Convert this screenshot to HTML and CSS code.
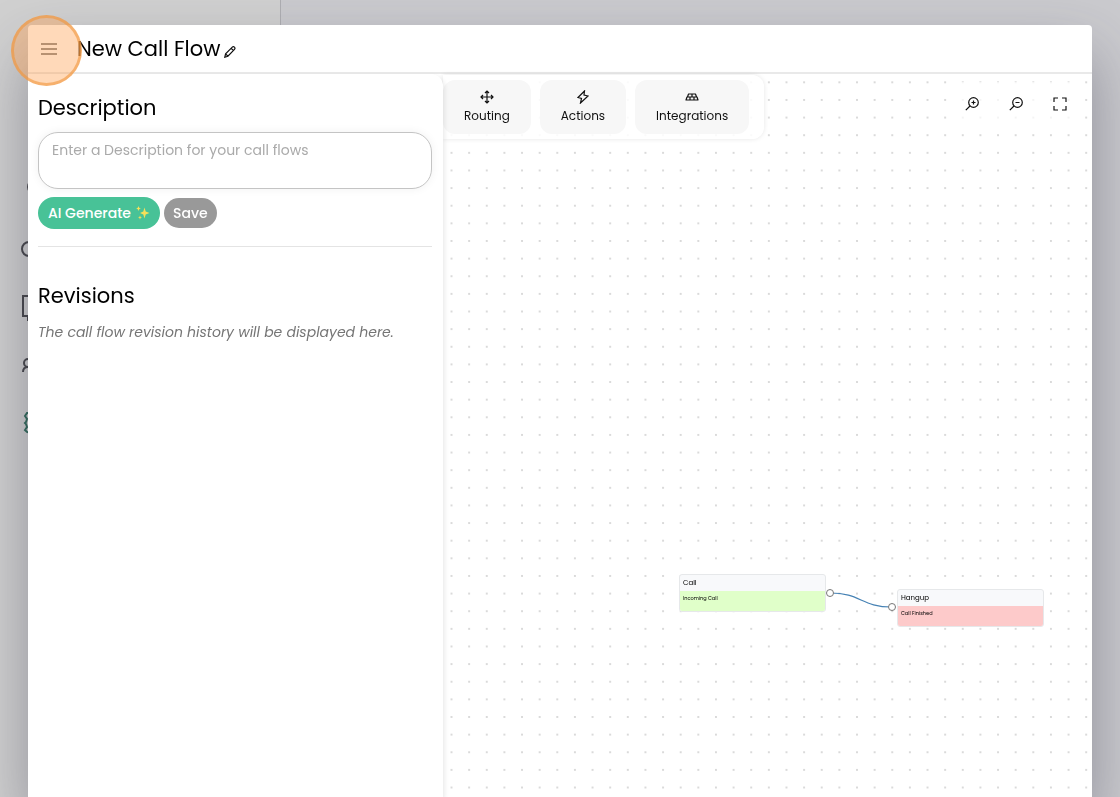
FILE: index.html
```html
<!DOCTYPE html>
<html lang="en">
  <head>
    <meta charset="UTF-8" />
    <meta name="viewport" content="width=device-width, initial-scale=1.0" />
    <title>New Call Flow</title>
    <link rel="stylesheet" href="styles.css">
  </head>
  <body>
    <nav class="sidebar">
      <svg class="side-icon" viewBox="0 0 30 30"><circle cx="15" cy="12" r="7" /></svg>
      <svg class="side-icon" viewBox="0 0 30 30"><circle cx="9" cy="16" r="7" /></svg>
      <svg class="side-icon" viewBox="0 0 30 30"><path d="M3 5h25v20H14l-6 4v-4H3z" /></svg>
      <svg class="side-icon" viewBox="0 0 30 30"><circle cx="8" cy="14" r="4" /><path d="M3 23c0-3 1-5 5-5s5 2 5 5" /></svg>
      <svg class="side-icon active" viewBox="0 0 30 30"><path d="M10 6L7 6 5 9l2 3-1 3-1 1 1 1 1 3-2 3 2 2 3 1 3-2 3 2 4-3v-5l2-2-2-3V8l-4-2-3 2z" /></svg>
    </nav>

    <div class="overlay">
      <main class="modal">
        <header class="modal-header">
          <button class="icon-button menu" aria-label="Menu">
            <svg viewBox="0 0 20 14"><path d="M2 2h16M2 7h16M2 12h16" /></svg>
          </button>
          <h1>New Call Flow</h1>
          <button class="icon-button edit" aria-label="Edit name">
            <svg viewBox="0 0 12 12"><path d="M.8 11.200l.8-3.400L8.300 1.100c.7-.7 1.500-.5 2.100.1s.8 1.400.1 2.100L3.900 10.200zM7.200 2.300l2.200 2.200M1.600 7.800l2.300 2.400" /></svg>
          </button>
        </header>

        <div class="modal-body">
          <section class="panel">
            <h2><label for="description">Description</label></h2>
            <textarea id="description" placeholder="Enter a Description for your call flows"></textarea>
            <div class="actions">
              <button class="pill generate">
                AI Generate
                <svg viewBox="0 0 14 14"><path d="M8.500 1.500l1.200 4 3.800 1.500-3.800 1.500-1.200 4-1.200-4L4 7l3.300-1.500zM2.500 0l.7 1.800 1.600.7-1.600.7-.7 1.800-.7-1.800L.2 2.500l1.600-.7zM4 9.500l.6 1.400 1.400.6-1.400.6L4 13.500l-.6-1.400-1.400-.6 1.400-.6z" /></svg>
              </button>
              <button class="pill save">Save</button>
            </div>
            <hr />
            <h2>Revisions</h2>
            <p class="empty">The call flow revision history will be displayed here.</p>
          </section>

          <section class="canvas">
            <svg class="grid">
              <defs>
                <pattern id="dots" width="20" height="20" patternUnits="userSpaceOnUse" patternTransform="translate(-0.300 -0.500) scale(0.8815)">
                  <circle cx="10" cy="10" r="1" />
                </pattern>
              </defs>
              <rect width="100%" height="100%" fill="url(#dots)" />
            </svg>

            <div class="toolbar">
              <button class="tool">
                <svg viewBox="0 0 14 14"><path d="M7 1v12M1 7h12M5 3l2-2 2 2M5 11l2 2 2-2M3 5L1 7l2 2M11 5l2 2-2 2" /></svg>
                Routing
              </button>
              <button class="tool">
                <svg viewBox="0 0 14 14"><path d="M8.500 1L2 7.500l3.500 1L4.500 13 12 6 8 5z" /></svg>
                Actions
              </button>
              <button class="tool">
                <svg viewBox="0 0 14 14"><path d="M3.500 4h7l1 3h-9zM2 7h10l1 3H1zM7 4v3M5 7v3M9 7v3" stroke-linejoin="round" /></svg>
                Integrations
              </button>
            </div>

            <div class="zoom">
              <button class="icon-button" aria-label="Zoom in">
                <svg viewBox="0 0 14 14"><circle cx="8.500" cy="5.500" r="4.800" /><path d="M5 9L.8 13.200M6.500 5.500h4M8.500 3.500v4" /></svg>
              </button>
              <button class="icon-button" aria-label="Zoom out">
                <svg viewBox="0 0 14 14"><circle cx="8.500" cy="5.500" r="4.800" /><path d="M5 9L.8 13.200M6.500 5.500h4" /></svg>
              </button>
              <button class="icon-button" aria-label="Fit to screen">
                <svg viewBox="0 0 14 14"><path d="M1 5V1h4M9 1h4v4M13 9v4H9M5 13H1V9" /></svg>
              </button>
            </div>

            <svg class="wire" viewBox="0 0 72 24">
              <path d="M5 5C36 5 36 19 67 19" />
              <circle cx="5" cy="5" r="3.500" />
              <circle cx="67" cy="19" r="3.500" />
            </svg>
            <article class="node call">
              <h3>Call</h3>
              <p>Incoming Call</p>
            </article>
            <article class="node hangup">
              <h3>Hangup</h3>
              <p>Call Finished</p>
            </article>
          </section>
        </div>
      </main>
      <div class="highlight"></div>
    </div>
  </body>
</html>
```

FILE: styles.css
```css
* {
  box-sizing: border-box;
}
body {
  margin: 0;
  height: 100vh;
  overflow: hidden;
  background-color: #cacace;
  font-family: Poppins, Inter, sans-serif;
  color: #000;
}
h1, h2, h3, p {
  margin: 0;
  font-weight: 400;
}
button, textarea {
  font-family: inherit;
}
button {
  border: none;
  cursor: pointer;
}
svg {
  fill: none;
  stroke: currentColor;
}

/* Page behind the modal */
.sidebar {
  width: 281px;
  height: 100%;
  padding: 175px 0 0 20px;
  display: flex;
  flex-direction: column;
  gap: 28px;
  background-color: #d0d0d0;
  border-right: 1px solid #aeaeb2;
}
.side-icon {
  width: 30px;
  height: 30px;
  stroke: #47474b;
  stroke-width: 2;
}
.side-icon.active {
  stroke: #326b5b;
}

.overlay {
  position: fixed;
  inset: 0;
  padding: 25px 28px 0;
}
.modal {
  height: 100%;
  display: flex;
  flex-direction: column;
  overflow: hidden;
  background-color: #fff;
  border-radius: 4px 4px 0 0;
  box-shadow: 0 30px 60px rgba(50, 50, 70, 0.4);
}
.modal-header {
  display: flex;
  align-items: center;
  height: 49px;
  padding-left: 11px;
  border-bottom: 2px solid #e9e9e9;
}
.modal-header h1 {
  margin-left: 18px;
  font-size: 21px;
  line-height: 32px;
}
.icon-button {
  display: flex;
  padding: 0;
  background: none;
  color: #111;
}
.icon-button svg, .tool svg {
  stroke-width: 1.2;
}
.menu svg {
  width: 20px;
  height: 14px;
}
.edit {
  margin: 6px 0 0 4px;
}
.edit svg {
  width: 12px;
  height: 12px;
}
.modal-body {
  flex: 1;
  display: flex;
  min-height: 0;
}

/* Description panel */
.panel {
  z-index: 1;
  flex: 0 0 415px;
  padding: 16px 11px 0 10px;
  background-color: #fff;
  border-radius: 0 12px 0 0;
  box-shadow: 2px 2px 4px rgba(0, 0, 0, 0.08);
}
.panel h2 {
  font-size: 21px;
  line-height: 36px;
}
.panel textarea {
  display: block;
  width: 100%;
  height: 57px;
  margin-top: 6px;
  padding: 6px 13px;
  border: 1px solid #c4c4c4;
  border-radius: 20px;
  box-shadow: 0 0 10px rgba(0, 0, 0, 0.06);
  font-size: 14px;
  line-height: 22px;
  resize: none;
}
.panel textarea::placeholder {
  color: #aaa;
}
.actions {
  display: flex;
  align-items: center;
  gap: 4px;
  margin-top: 8px;
}
.pill {
  display: flex;
  align-items: center;
  justify-content: center;
  gap: 5px;
  height: 32px;
  padding: 0 10px;
  border-radius: 16px;
  color: #fff;
  font-size: 14px;
  font-weight: 500;
}
.pill svg {
  width: 14px;
  height: 14px;
  fill: #f5e05a;
  stroke: none;
}
.generate {
  background-color: #48c297;
}
.save {
  height: 30px;
  padding: 0 9px;
  background-color: #999;
}
.panel hr {
  margin: 17px 0 31px;
  border: none;
  border-top: 1px solid #e4e4e4;
}
.empty {
  margin-top: 6px;
  color: #757575;
  font-size: 14px;
  font-style: italic;
  line-height: 24px;
}

/* Flow canvas */
.canvas {
  position: relative;
  flex: 1;
  display: flex;
  align-items: flex-start;
  justify-content: space-between;
}
.grid {
  position: absolute;
  width: 100%;
  height: 100%;
  fill: #c8c8c8;
  stroke: none;
}
.toolbar {
  position: relative;
  display: flex;
  gap: 9px;
  margin-top: 1px;
  padding: 5px 15px 5px 0;
  background-color: rgba(255, 255, 255, 0.85);
  border-radius: 0 12px 12px 0;
  box-shadow: 0 0 5px rgba(0, 0, 0, 0.1);
}
.tool {
  display: flex;
  flex-direction: column;
  align-items: center;
  gap: 2px;
  height: 54px;
  padding: 10px 21px 0;
  background-color: #f7f7f7;
  border-radius: 12px;
  color: #111;
  font-size: 12px;
  line-height: 20px;
}
.tool svg {
  width: 14px;
  height: 14px;
}
.zoom {
  position: relative;
  display: flex;
  gap: 30px;
  padding: 15px 17px;
  margin: 8px 8px 0 0;
  background-color: rgba(255, 255, 255, 0.7);
  border-radius: 12px;
}
.zoom svg {
  width: 14px;
  height: 14px;
}
.node {
  position: absolute;
  width: 147px;
  border: 1px solid #e6e8ea;
  border-radius: 3px;
  background-color: #f8f9fb;
  overflow: hidden;
}
.node h3 {
  padding: 0 3px;
  font-size: 7px;
  line-height: 16px;
}
.node p {
  height: 20px;
  padding: 3px 3px;
  font-size: 5px;
  line-height: 10px;
}
.call {
  left: 236px;
  top: 500px;
}
.call p {
  background-color: #e0ffc9;
}
.hangup {
  left: 454px;
  top: 515px;
}
.hangup p {
  background-color: #fdcaca;
}
.wire {
  position: absolute;
  left: 382px;
  top: 514px;
  width: 72px;
  height: 24px;
}
.wire path {
  stroke: #4682b4;
  stroke-width: 1.2;
}
.wire circle {
  fill: #fff;
  stroke: #777;
}

/* Pointer marker over the menu button */
.highlight {
  position: absolute;
  z-index: 2;
  left: 11px;
  top: 15px;
  width: 71px;
  height: 71px;
  border: 3px solid rgba(240, 150, 60, 0.6);
  border-radius: 50%;
  background-color: rgba(255, 160, 80, 0.4);
  pointer-events: none;
}
```
